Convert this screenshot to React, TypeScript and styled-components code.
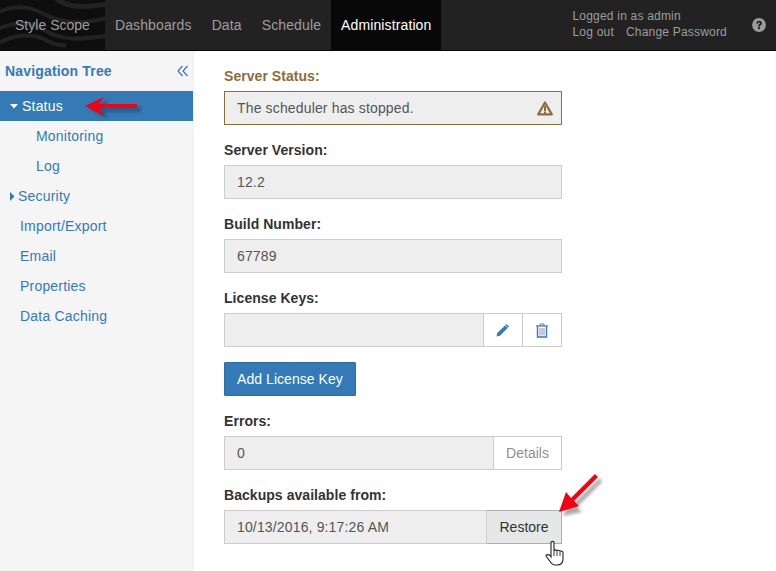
import React from "react";
import styled, { createGlobalStyle } from "styled-components";

const Global = createGlobalStyle`
  html, body { margin: 0; padding: 0; background: #fff; }
  body { font-family: "Liberation Sans", Arial, sans-serif; font-size: 14px; color: #333; }
  #root { width: 776px; height: 571px; overflow: hidden; }
`;
const Page = styled.div`
  position: relative; width: 776px; height: 571px; display: flex; flex-direction: column; overflow: hidden;
`;
const Header = styled.header`
  position: relative; flex: 0 0 51px; box-sizing: border-box; height: 51px; background: #222; border-bottom: 1px solid #080808;
  display: flex; align-items: stretch; overflow: hidden;
`;
const Swoosh = styled.svg`position: absolute; left: 0; top: 0;`;
const Brand = styled.div`
  position: relative; color: #9d9d9d; font-size: 14px; line-height: 50px; padding: 0 15px 0 15px; letter-spacing: .02px;
`;
const NavItem = styled.div<{ $active?: boolean }>`
  position: relative; line-height: 50px; font-size: 14px; padding: 0 10px; letter-spacing: .12px;
  color: ${p => (p.$active ? "#fff" : "#9d9d9d")};
  background: ${p => (p.$active ? "#080808" : "transparent")};
`;
const UserBox = styled.div`
  margin-left: auto; display: flex; flex-direction: column; padding-top: 8px; font-size: 12px; line-height: 16px; color: #9d9d9d; letter-spacing: .2px;
`;
const UserLinks = styled.div`display: flex; gap: 12px;`;
const Help = styled.svg`margin: 18px 10px 0 25px; flex: none;`;
const Body = styled.div`flex: 1; display: flex; min-height: 0;`;
const Side = styled.aside`
  width: 194px; flex: none; box-sizing: border-box; background: #f5f5f5; border-right: 1px solid #eee;
`;
const SideHead = styled.div`
  height: 40px; box-sizing: border-box; display: flex; align-items: center; justify-content: space-between; padding: 0 4px 0 5px;
  font-weight: 700; font-size: 14px; color: #337ab7; letter-spacing: .17px;
`;
const Tree = styled.div`display: flex; flex-direction: column;`;
const TreeRow = styled.div<{ $active?: boolean; $indent: number }>`
  height: 30px; line-height: 30px; font-size: 14px; display: flex; align-items: center; width: 193px; letter-spacing: .2px;
  padding-left: ${p => p.$indent}px; box-sizing: border-box;
  color: ${p => (p.$active ? "#fff" : "#337ab7")};
  background: ${p => (p.$active ? "#337ab7" : "transparent")};
`;
const Caret = styled.svg`flex: none; margin-right: 3px;`;
const Main = styled.main`
  flex: 1; padding: 15px 0 0 30px; display: flex; flex-direction: column; width: 338px;
`;
const Group = styled.div`width: 338px; margin-bottom: 15px;`;
const Label = styled.div<{ $warn?: boolean }>`
  font-weight: 700; font-size: 14px; line-height: 20px; height: 20px; margin-bottom: 5px; color: ${p => (p.$warn ? "#8a6d3b" : "#333")}; letter-spacing: .05px;
`;
const InputRow = styled.div`display: flex; height: 34px;`;
const Field = styled.div<{ $warn?: boolean }>`
  flex: 1; min-width: 0; box-sizing: border-box; height: 34px; padding: 0 12px; line-height: 32px; font-size: 14px; color: #555; letter-spacing: .15px;
  background: #eee; border: 1px solid ${p => (p.$warn ? "#8a6d3b" : "#ccc")}; position: relative;
`;
const WarnIcon = styled.svg`position: absolute; right: 8px; top: 9px;`;
const Addon = styled.div<{ $w: number; $hover?: boolean; $muted?: boolean }>`
  width: ${p => p.$w}px; flex: none; box-sizing: border-box; height: 34px; margin-left: -1px; display: flex; align-items: center; justify-content: center;
  background: ${p => (p.$hover ? "#e6e8e8" : "#fff")}; border: 1px solid ${p => (p.$hover ? "#adadad" : "#ccc")};
  font-size: 14px; color: ${p => (p.$muted ? "#8f8f8f" : "#333")};
`;
const Primary = styled.div`
  width: 132px; height: 34px; box-sizing: border-box; background: #337ab7; border: 1px solid #2e6da4; color: #fff; font-size: 14px; letter-spacing: .05px;
  display: flex; align-items: center; justify-content: center; margin-bottom: 15px; border-radius: 1px;
`;
const Overlay = styled.svg<{ $x: number; $y: number }>`
  position: absolute; left: ${p => p.$x}px; top: ${p => p.$y}px; pointer-events: none; overflow: visible;
`;

const fields = [
  { label: "Server Version:", value: "12.2" },
  { label: "Build Number:", value: "67789" },
];

export default function App() {
  return (
    <Page>
      <Global />
      <Header>
        <Swoosh width="105" height="50" viewBox="0 0 105 50">
          <rect width="105" height="50" fill="#0e0e0e" />
          <g fill="none" stroke="#222" strokeLinecap="butt">
            <path d="M54 -3 C64 6 78 9 106 4" strokeWidth="5" />
            <path d="M-2 12 C14 6 28 5 44 14 C62 24 84 24 106 18" strokeWidth="4" />
            <path d="M-2 29 C14 22 30 20 46 31 C60 40 78 40 106 36" strokeWidth="4" />
            <path d="M-2 43 C14 35 30 33 44 39 C52 44 58 46 66 45" strokeWidth="4" />
          </g>
        </Swoosh>
        <Brand>Style Scope</Brand>
        <NavItem>Dashboards</NavItem>
        <NavItem>Data</NavItem>
        <NavItem>Schedule</NavItem>
        <NavItem $active>Administration</NavItem>
        <UserBox>
          <div>Logged in as admin</div>
          <UserLinks><span>Log out</span><span>Change Password</span></UserLinks>
        </UserBox>
        <Help width="14" height="14" viewBox="0 0 14 14">
          <circle cx="7" cy="7" r="6.9" fill="#9d9d9d" />
          <path d="M4.3 5.4 C4.4 3.6 5.6 2.8 7.1 2.8 C8.8 2.8 10 3.8 10 5.2 C10 7 8 7 8 8.4 L6 8.4 C6 6.2 8 6.2 8 5.3 C8 4.8 7.6 4.6 7 4.6 C6.4 4.6 6 5 6 5.7 Z" fill="#222" />
          <rect x="6" y="9.2" width="2" height="1.9" fill="#222" />
        </Help>
      </Header>
      <Body>
        <Side>
          <SideHead>
            <span>Navigation Tree</span>
            <svg width="12" height="12" viewBox="0 0 12 12" fill="none" stroke="#337ab7" strokeWidth="1.2">
              <path d="M5.5 1 L1 6 L5.5 11" /><path d="M10.5 1 L6 6 L10.5 11" />
            </svg>
          </SideHead>
          <Tree>
            <TreeRow $active $indent={10}>
              <Caret width="9" height="5" viewBox="0 0 9 5"><path d="M0 0 H8 L4 4.5 Z" fill="#fff" /></Caret>
              Status
            </TreeRow>
            <TreeRow $indent={36}>Monitoring</TreeRow>
            <TreeRow $indent={36}>Log</TreeRow>
            <TreeRow $indent={10}>
              <Caret width="5" height="9" viewBox="0 0 5 9"><path d="M0 0 L4.5 4.5 L0 9 Z" fill="#337ab7" /></Caret>
              Security
            </TreeRow>
            <TreeRow $indent={20}>Import/Export</TreeRow>
            <TreeRow $indent={20}>Email</TreeRow>
            <TreeRow $indent={20}>Properties</TreeRow>
            <TreeRow $indent={20}>Data Caching</TreeRow>
          </Tree>
        </Side>
        <Main>
          <Group>
            <Label $warn>Server Status:</Label>
            <InputRow>
              <Field $warn>
                The scheduler has stopped.
                <WarnIcon width="16" height="15" viewBox="0 0 16 15">
                  <path d="M8 1.5 L14.8 13.4 H1.2 Z" fill="none" stroke="#8a6d3b" strokeWidth="2.2" strokeLinejoin="round" />
                  <rect x="7" y="5" width="2" height="5" fill="#8a6d3b" />
                  <rect x="7" y="10.5" width="2" height="2" fill="#8a6d3b" />
                </WarnIcon>
              </Field>
            </InputRow>
          </Group>
          {fields.map(f => (
            <Group key={f.label}>
              <Label>{f.label}</Label>
              <InputRow><Field>{f.value}</Field></InputRow>
            </Group>
          ))}
          <Group>
            <Label>License Keys:</Label>
            <InputRow>
              <Field />
              <Addon $w={40}>
                <svg width="14" height="14" viewBox="0 0 14 14">
                  <path d="M0.5 13.5 L1.3 10 L10.5 0.9 L13.1 3.5 L4 12.7 Z" fill="#337ab7" />
                  <path d="M9.4 2.2 L11.9 4.7" stroke="#fff" strokeWidth=".8" />
                </svg>
              </Addon>
              <Addon $w={40}>
                <svg width="14" height="15" viewBox="0 0 14 15" fill="none" stroke="#5b7fa6">
                  <path d="M1 3 H13" strokeWidth="1.4" />
                  <path d="M5 3 V1 H9 V3" strokeWidth="1" />
                  <path d="M2.5 3.5 V14 H11.5 V3.5" strokeWidth="1.4" stroke="#337ab7" />
                  <path d="M5 5 V12.5 M7 5 V12.5 M9 5 V12.5" strokeWidth="1" stroke="#9a8fb0" />
                </svg>
              </Addon>
            </InputRow>
          </Group>
          <Primary>Add License Key</Primary>
          <Group>
            <Label>Errors:</Label>
            <InputRow>
              <Field>0</Field>
              <Addon $w={69} $muted>Details</Addon>
            </InputRow>
          </Group>
          <Group>
            <Label>Backups available from:</Label>
            <InputRow>
              <Field>10/13/2016, 9:17:26 AM</Field>
              <Addon $w={76} $hover>Restore</Addon>
            </InputRow>
          </Group>
        </Main>
      </Body>
      <Overlay $x={84} $y={95} width="56" height="26" viewBox="0 0 56 26">
        <defs>
          <filter id="arrowBlur" x="-30%" y="-30%" width="160%" height="160%"><feGaussianBlur stdDeviation="1.6" /></filter>
        </defs>
        <path d="M5 14 L24 5 L21 12 H57 V17 H21 L24 24 Z" fill="#1c3f66" opacity=".55" filter="url(#arrowBlur)" />
        <path d="M1 11 L20 2 L15 9 H53 V13 H15 L20 21 Z" fill="#f40010" />
      </Overlay>
      <Overlay $x={558} $y={472} width="44" height="46" viewBox="0 0 44 46">
        <path d="M5 44 L12 27 L16 31 L42 6 L44 10 L19 35 L24 40 Z" fill="#444" opacity=".45" filter="url(#arrowBlur)" />
        <path d="M1 40 L8 20 L13 26 L37 2 L40 5 L16 29 L21 34 Z" fill="#f40010" />
      </Overlay>
      <Overlay $x={545} $y={540} width="20" height="28" viewBox="0 0 20 28">
        <path d="M6 2.5 C6 1 9 1 9 2.5 V11 C9 9.5 12 9.5 12 11 C12 10 15 10 15 11.5 C15 10.8 18 10.8 18 12.5 V19 C18 23 16 25 12 25 H10 C7 25 6 23 4 20 L1 16 C1 14.5 3 14 5 15.5 L6 17 Z" fill="#fff" stroke="#222" strokeWidth="1.1" />
        <path d="M9 11 V16 M12 11 V16 M15 11.5 V16" stroke="#222" strokeWidth=".9" fill="none" />
      </Overlay>
    </Page>
  );
}
